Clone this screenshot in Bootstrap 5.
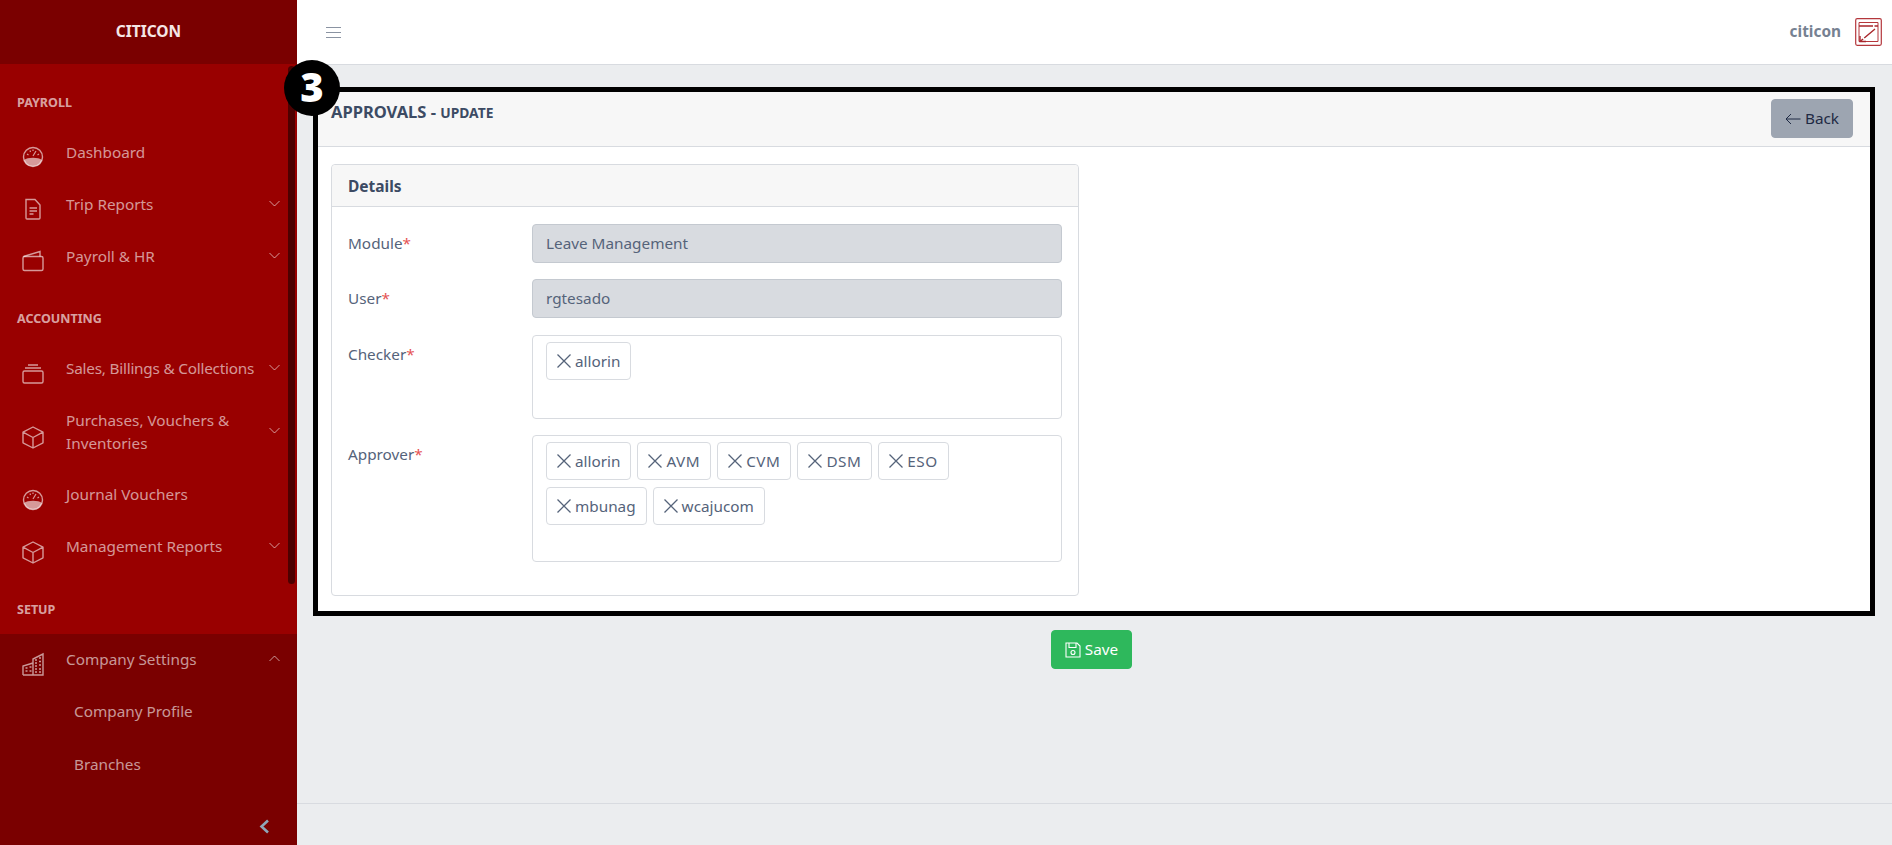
<!DOCTYPE html>
<html lang="en">
<head>
    <meta charset="UTF-8">
    <meta name="viewport" content="width=device-width, initial-scale=1.0">
    <title>Approvals - Update</title>
    <link href="https://cdn.jsdelivr.net/npm/bootstrap@5.3.0/dist/css/bootstrap.min.css" rel="stylesheet">
    <style>
        html, body { height: 845px; overflow: hidden; }
        body { font-family: "Noto Sans", "Open Sans", sans-serif; font-size: 15.3px; color: #3c4b64; background: #ebedef; }
        .app-wrap { height: 845px; overflow: hidden; }
        .app-side { width: 297px; height: 845px; flex: none; background: #990000; color: rgba(255,255,255,.6); position: relative; }
        .side-brand { height: 64px; background: #7a0000; color: #f5e6e6; font-weight: 700; font-size: 15.5px; }
        .side-label { font-size: 12.5px; font-weight: 700; color: rgba(255,255,255,.65); padding: 0 17px; line-height: 20px; }
        .label-first { margin-top: 29px; margin-bottom: 13px; }
        .label-mid { margin-top: 26.5px; margin-bottom: 14px; }
        .label-last { margin-top: 27.5px; margin-bottom: 13px; }
        .side-item { display: flex; align-items: center; padding: 14px 17px 14px 20px; line-height: 23px; min-height: 52px; color: inherit; text-decoration: none; }
        .side-item .ico { width: 26px; height: 26px; flex: none; margin: 4px 20px -6px 0; }
        .side-item .txt { flex: 1; }
        .side-item .txt-tight { letter-spacing: -.014em; white-space: nowrap; }
        .side-item .chev { width: 11px; height: 7px; flex: none; margin: -2px 0 0 9px; }
        .side-sub { padding: 14px 17px 14px 74px; line-height: 24px; height: 52.5px; color: inherit; text-decoration: none; display: block; }
        .side-open { background: #7a0000; position: absolute; left: 0; right: 0; top: 634px; bottom: 0; }
        .side-scroll { position: absolute; top: 66px; left: 288px; width: 7px; height: 518px; background: #4d0000; border-radius: 4px; }
        .side-collapse { position: absolute; right: 27px; bottom: 11px; width: 12px; height: 15px; }
        .top-bar { height: 65px; background: #fff; border-bottom: 1px solid #d8dbe0; padding: 0 10px 0 29px; }
        .top-user { font-weight: 700; color: #768192; font-size: 15.4px; margin-right: 14px; }
        .mark-box { position: relative; border: 5px solid #000; margin: 22px 17px 0 16px; background: #fff; }
        .mark-num { position: absolute; left: -34px; top: -32px; width: 56px; height: 56px; border-radius: 50%; background: #000; color: #fff; font-weight: 800; font-size: 40px; line-height: 54px; text-align: center; font-family: "Open Sans", sans-serif; z-index: 2; }
        .page-head { height: 55px; background: #f7f7f7; border-bottom: 1px solid #d8dbe0; padding: 7px 17px 0 13px; }
        .page-title { font-weight: 700; font-size: 16.5px; margin-top: 1px; }
        .page-title span { font-size: 13.8px; }
        .btn-back { background: #9da5b1; border-color: #9da5b1; color: #1f2a44; font-size: 15.3px; padding: 6px 13px; height: 39px; border-radius: 4px; }
        .page-body { padding: 17px 13px 15px; }
        .details { width: 748px; border: 1px solid #d8dbe0; border-radius: 4px; height: 432px; }
        .details-head { height: 42px; background: #f7f7f7; border-bottom: 1px solid #d8dbe0; padding: 0 16px; font-weight: 700; font-size: 15.5px; line-height: 42px; border-radius: 4px 4px 0 0; }
        .details-body { padding: 17px 16px 0 16px; }
        .field { display: flex; margin-bottom: 16px; }
        .field-wide { margin-bottom: 17px; }
        .field-label { width: 184px; flex: none; padding-top: 7px; color: #55637a; line-height: 24px; }
        .field-label i { color: #e55353; font-style: normal; }
        .field-ro { width: 530px; height: 39px; background: #d8dbe0; border: 1px solid #c4c9d0; border-radius: 4px; color: #55637a; padding: 6px 13px; line-height: 25px; }
        .tag-box { width: 530px; border: 1px solid #d8dbe0; border-radius: 4px; padding: 6px 13px; display: flex; flex-wrap: wrap; align-content: flex-start; gap: 7px 6px; }
        .tag-item { height: 38px; border: 1px solid #d8dbe0; border-radius: 4px; padding: 0 10px 0 9px; display: inline-flex; align-items: center; gap: 3px; color: #55637a; }
        .tag-item svg { width: 16px; height: 16px; }
        .tag-caps { letter-spacing: .5px; }
        .save-row { margin-top: 14px; padding-right: 6px; }
        .btn-save { background: #2eb85c; border-color: #2eb85c; color: #fff; font-size: 15.3px; height: 39px; padding: 6px 13px; border-radius: 4px; }
        .foot-line { position: absolute; left: 297px; right: 0; top: 803px; border-top: 1px solid #d8dbe0; }
    </style>
</head>
<body>
    <svg width="0" height="0" class="position-absolute">
        <symbol id="i-gauge" viewBox="0 0 26 26"><circle cx="13" cy="13" r="9.5" fill="none" stroke="currentColor" stroke-width="1.4"/><path d="M4 16a9.500 9.500 0 0 0 18 0c-2-1.500-5-2.200-9-2.200s-7 .7-9 2.200z" fill="currentColor"/><path d="M13 12l3-5M7 10l1.500 1M19 10l-1.500 1M10 6.500l.5 1.500M13 5.500v1.500" stroke="currentColor" stroke-width="1.2" fill="none"/></symbol>
        <symbol id="i-doc" viewBox="0 0 26 26"><path d="M6 3.500h9l5 5.500v13a1 1 0 0 1-1 1H7a1 1 0 0 1-1-1z" fill="none" stroke="currentColor" stroke-width="1.4"/><path d="M9.500 12h7.500M9.500 15h7.500M9.500 18h4" stroke="currentColor" stroke-width="1.4"/></symbol>
        <symbol id="i-wallet" viewBox="0 0 26 26"><rect x="3" y="8.500" width="20" height="14" rx="1.500" fill="none" stroke="currentColor" stroke-width="1.4"/><path d="M3.500 8.500L20 3.500v5" fill="none" stroke="currentColor" stroke-width="1.4"/></symbol>
        <symbol id="i-stack" viewBox="0 0 26 26"><rect x="3" y="10" width="20" height="12" rx="1.500" fill="none" stroke="currentColor" stroke-width="1.4"/><path d="M5 7h16M8 4h10" stroke="currentColor" stroke-width="1.4"/></symbol>
        <symbol id="i-box" viewBox="0 0 26 26"><path d="M13 3l10 5.200v10.600L13 24 3 18.800V8.200zM3 8.200L13 13.500l10-5.300M13 13.500V24" fill="none" stroke="currentColor" stroke-width="1.4" stroke-linejoin="round"/></symbol>
        <symbol id="i-city" viewBox="0 0 26 26"><path d="M13 24V8L23 3v21zM3 24v-9l10-3M3 24h20" fill="none" stroke="currentColor" stroke-width="1.4"/><path d="M15 9h2M19 7h2M15 12h2M19 10.500h2M15 15h2M19 14h2M15 18h2M19 18h2M15 21h2M19 21h2M5.500 17h2M9.500 16h2M5.500 20h2M9.500 20h2" stroke="currentColor" stroke-width="1.5"/></symbol>
        <symbol id="i-chev" viewBox="0 0 11 7"><path d="M.5 1l5 5 5-5" fill="none" stroke="currentColor" stroke-width="1"/></symbol>
        <symbol id="i-x" viewBox="0 0 16 16"><path d="M1.500 1.500l13 13M14.500 1.500l-13 13" stroke="currentColor" stroke-width="1.300" fill="none"/></symbol>
    </svg>

    <div class="d-flex app-wrap">
        <aside class="app-side">
            <div class="side-open"></div>
            <div class="position-relative">
                <div class="side-brand d-flex align-items-center justify-content-center">CITICON</div>
                <div class="side-label label-first">PAYROLL</div>
                <a class="side-item" href="#"><svg class="ico"><use href="#i-gauge"/></svg><span class="txt">Dashboard</span></a>
                <a class="side-item" href="#"><svg class="ico"><use href="#i-doc"/></svg><span class="txt">Trip Reports</span><svg class="chev"><use href="#i-chev"/></svg></a>
                <a class="side-item" href="#"><svg class="ico"><use href="#i-wallet"/></svg><span class="txt">Payroll &amp; HR</span><svg class="chev"><use href="#i-chev"/></svg></a>
                <div class="side-label label-mid">ACCOUNTING</div>
                <a class="side-item" href="#"><svg class="ico"><use href="#i-stack"/></svg><span class="txt txt-tight">Sales, Billings &amp; Collections</span><svg class="chev"><use href="#i-chev"/></svg></a>
                <a class="side-item" href="#"><svg class="ico"><use href="#i-box"/></svg><span class="txt">Purchases, Vouchers &amp; Inventories</span><svg class="chev"><use href="#i-chev"/></svg></a>
                <a class="side-item" href="#"><svg class="ico"><use href="#i-gauge"/></svg><span class="txt">Journal Vouchers</span></a>
                <a class="side-item" href="#"><svg class="ico"><use href="#i-box"/></svg><span class="txt">Management Reports</span><svg class="chev"><use href="#i-chev"/></svg></a>
                <div class="side-label label-last">SETUP</div>
                <a class="side-item" href="#"><svg class="ico"><use href="#i-city"/></svg><span class="txt">Company Settings</span><svg class="chev" style="transform:rotate(180deg)"><use href="#i-chev"/></svg></a>
                <a class="side-sub" href="#">Company Profile</a>
                <a class="side-sub" href="#">Branches</a>
            </div>
            <div class="side-scroll"></div>
            <svg class="side-collapse" viewBox="0 0 12 15"><path d="M10 1.500L3.500 7.500l6.500 6" fill="none" stroke="#8fa6b8" stroke-width="2.600"/></svg>
        </aside>

        <main class="flex-grow-1 position-relative">
            <header class="top-bar d-flex align-items-center justify-content-between">
                <svg width="15" height="13" viewBox="0 0 15 13"><path d="M0 1.500h15M0 6.500h15M0 11.500h15" stroke="#8a93a2" stroke-width="1.100"/></svg>
                <div class="d-flex align-items-center">
                    <span class="top-user">citicon</span>
                    <svg width="27" height="28" viewBox="0 0 27 28"><rect x=".7" y=".7" width="25.6" height="26.6" rx="1.500" fill="#fff" stroke="#b4373c" stroke-width="1.2"/><path d="M4 4.500h19v19H4z" stroke="#b4373c" stroke-width="1" fill="none"/><path d="M4 8h19M20 11L5 23.500" stroke="#a8262b" stroke-width="1.400" fill="none" stroke-dasharray="14 1.500"/><path d="M5 18v5.500h6" stroke="#a8262b" stroke-width="1.400" fill="none"/></svg>
                </div>
            </header>

            <section class="mark-box">
                <div class="mark-num">3</div>
                <div class="page-head d-flex justify-content-between align-items-start">
                    <div class="page-title">APPROVALS - <span>UPDATE</span></div>
                    <button class="btn btn-back d-inline-flex align-items-center gap-1">
                        <svg width="16" height="12" viewBox="0 0 16 12"><path d="M15.500 6H1M6 1L1 6l5 5" fill="none" stroke="currentColor" stroke-width="1"/></svg>Back
                    </button>
                </div>
                <div class="page-body">
                    <div class="details">
                        <div class="details-head">Details</div>
                        <div class="details-body">
                            <div class="field"><div class="field-label">Module<i>*</i></div><div class="field-ro">Leave Management</div></div>
                            <div class="field field-wide"><div class="field-label">User<i>*</i></div><div class="field-ro">rgtesado</div></div>
                            <div class="field">
                                <div class="field-label">Checker<i>*</i></div>
                                <div class="tag-box" style="height:84px" id="checkerBox"></div>
                            </div>
                            <div class="field">
                                <div class="field-label">Approver<i>*</i></div>
                                <div class="tag-box" style="height:127px" id="approverBox"></div>
                            </div>
                        </div>
                    </div>
                </div>
            </section>

            <div class="d-flex justify-content-center save-row">
                <button class="btn btn-save d-inline-flex align-items-center gap-1">
                    <svg width="16" height="16" viewBox="0 0 16 16"><path d="M1 1h11l3 3v11H1zM4 1v4.500h7V1" fill="none" stroke="currentColor" stroke-width="1.100"/><circle cx="8" cy="10.500" r="2" fill="none" stroke="currentColor" stroke-width="1.100"/></svg>Save
                </button>
            </div>
        </main>
    </div>
    <div class="foot-line"></div>

    <script src="https://cdn.jsdelivr.net/npm/bootstrap@5.3.0/dist/js/bootstrap.bundle.min.js"></script>
    <script>
        const checkers = ["allorin"];
        const approvers = ["allorin", "AVM", "CVM", "DSM", "ESO", "mbunag", "wcajucom"];

        function fillTags(id, names) {
            const box = document.getElementById(id);
            names.forEach((name) => {
                const tag = document.createElement('span');
                tag.className = name === name.toUpperCase() ? 'tag-item tag-caps' : 'tag-item';
                tag.innerHTML = `<svg><use href="#i-x"/></svg>${name}`;
                box.appendChild(tag);
            });
        }

        fillTags('checkerBox', checkers);
        fillTags('approverBox', approvers);
    </script>
</body>
</html>
